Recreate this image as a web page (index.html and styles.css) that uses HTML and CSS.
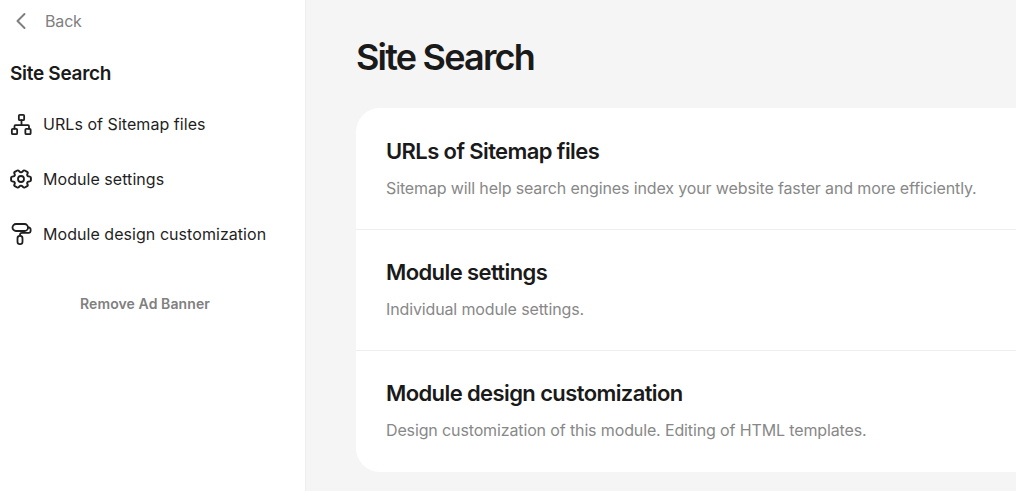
FILE: index.html
```html
<!DOCTYPE html>
<html lang="en">
<head>
<meta charset="utf-8">
<title>Site Search</title>
<link rel="stylesheet" href="styles.css">
</head>
<body>
<div class="app">
  <aside class="sidebar">
    <a class="back" href="#">
      <svg class="back-icon" width="24" height="24" viewBox="0 0 24 24" fill="none"><path d="M14.500 5 7.500 12l7 7" stroke="#7f7f7f" stroke-width="2" stroke-linecap="round" stroke-linejoin="round"/></svg>
      <span>Back</span>
    </a>
    <h2 class="side-title">Site Search</h2>
    <nav class="menu">
      <a class="menu-item" href="#">
        <svg width="24" height="24" viewBox="0 0 24 24" fill="none" stroke="#1f1f1f" stroke-width="1.8" stroke-linejoin="round" stroke-linecap="round"><rect x="8.850" y="2.850" width="5.300" height="5.300" rx="1"/><rect x="1.850" y="16.850" width="5.300" height="5.300" rx="1"/><rect x="15.350" y="16.850" width="5.300" height="5.300" rx="1"/><path d="M11.500 8.200V13M4.500 16.800V14.200a1 1 0 0 1 1-1h12.500a1 1 0 0 1 1 1v2.600"/></svg>
        <span>URLs of Sitemap files</span>
      </a>
      <a class="menu-item" href="#">
        <svg width="24" height="24" viewBox="0 0 24 24" fill="none" stroke="#1f1f1f" stroke-width="1.8" stroke-linejoin="round"><path transform="translate(11 12) scale(1.100 1) rotate(90) translate(-12 -12)" d="M9.594 3.940c.09-.542.56-.94 1.110-.94h2.593c.55 0 1.020.398 1.110.94l.213 1.281c.063.374.313.686.645.87.074.04.147.083.22.127.325.196.72.257 1.075.124l1.217-.456a1.125 1.125 0 0 1 1.370.49l1.296 2.247a1.125 1.125 0 0 1-.26 1.431l-1.003.827c-.293.241-.438.613-.43.992a7.723 7.723 0 0 1 0 .255c-.008.378.137.75.43.991l1.004.827c.424.35.534.955.26 1.430l-1.298 2.247a1.125 1.125 0 0 1-1.369.491l-1.217-.456c-.355-.133-.75-.072-1.076.124a6.470 6.470 0 0 1-.22.128c-.331.183-.581.495-.644.869l-.213 1.281c-.09.543-.56.94-1.110.94h-2.594c-.55 0-1.019-.398-1.110-.94l-.213-1.281c-.062-.374-.312-.686-.644-.87a6.520 6.520 0 0 1-.22-.127c-.325-.196-.72-.257-1.076-.124l-1.217.456a1.125 1.125 0 0 1-1.369-.49l-1.297-2.247a1.125 1.125 0 0 1 .26-1.431l1.004-.827c.292-.24.437-.613.43-.991a6.932 6.932 0 0 1 0-.255c.007-.38-.138-.751-.43-.992l-1.004-.827a1.125 1.125 0 0 1-.26-1.430l1.297-2.247a1.125 1.125 0 0 1 1.370-.491l1.216.456c.356.133.751.072 1.076-.124.072-.044.146-.086.22-.128.332-.183.582-.495.644-.869l.214-1.280Z"/><circle cx="11" cy="12" r="3"/></svg>
        <span>Module settings</span>
      </a>
      <a class="menu-item" href="#">
        <svg width="24" height="24" viewBox="0 0 24 24" fill="none" stroke="#1f1f1f" stroke-width="1.8" stroke-linejoin="round" stroke-linecap="round"><rect x="2.500" y="2" width="15.500" height="7" rx="3.500"/><path d="M18 5.500h.8a1.800 1.800 0 0 1 1.800 1.800v1.700a1.800 1.800 0 0 1-1.800 1.800h-6.800a2 2 0 0 0-2 2v.2"/><rect x="7.500" y="13.800" width="5" height="8.300" rx="2.400"/></svg>
        <span>Module design customization</span>
      </a>
    </nav>
    <a class="remove-ad" href="#">Remove Ad Banner</a>
  </aside>
  <main class="main">
    <h1 class="page-title">Site Search</h1>
    <section class="card">
      <a class="row" href="#">
        <h3 class="row-title">URLs of Sitemap files</h3>
        <p class="row-desc">Sitemap will help search engines index your website faster and more efficiently.</p>
      </a>
      <a class="row" href="#">
        <h3 class="row-title">Module settings</h3>
        <p class="row-desc">Individual module settings.</p>
      </a>
      <a class="row" href="#">
        <h3 class="row-title">Module design customization</h3>
        <p class="row-desc">Design customization of this module. Editing of HTML templates.</p>
      </a>
    </section>
  </main>
</div>
</body>
</html>
```
FILE: styles.css
```css
* { box-sizing: border-box; }
html, body { margin: 0; height: 100%; overflow: hidden; }
body { font-family: Inter, "Liberation Sans", sans-serif; color: #1a1a1a; background: #f5f5f5; }
a { text-decoration: none; color: inherit; }
.app { display: flex; width: 1016px; height: 491px; overflow: hidden; }
.sidebar { flex: 0 0 306px; background: #fff; border-right: 1px solid #eeeeee; padding: 9px 0 0 10px; }
.back { display: flex; align-items: center; gap: 11px; height: 24px; font-size: 16px; color: #808080; letter-spacing: -0.16px; }
.side-title { margin: 27px 0 0; font-size: 19px; line-height: 28px; font-weight: 600; letter-spacing: -0.3px; color: #1a1a1a; }
.menu { margin-top: 24px; display: flex; flex-direction: column; gap: 31px; }
.menu-item { display: flex; align-items: center; gap: 9px; height: 24px; font-size: 16px; font-weight: 400; letter-spacing: 0.05px; color: #1f1f1f; }
.remove-ad { display: block; width: 270px; margin-top: 48px; text-align: center; font-size: 14px; line-height: 20px; font-weight: 600; color: #808080; letter-spacing: 0.1px; }
.main { flex: 1 1 auto; min-width: 0; padding: 35px 0 0 50px; }
.page-title { margin: 0 0 29px; font-size: 36px; line-height: 44px; font-weight: 600; letter-spacing: -1.8px; color: #1a1a1a; }
.card { width: 760px; background: #fff; border-radius: 24px; }
.row { display: block; height: 121px; padding: 29px 30px 0; }
.row + .row { border-top: 1px solid #eeeeee; padding-top: 28px; }
.row:last-child { height: 122px; }
.row-title { margin: 0; font-size: 22px; line-height: 28px; font-weight: 600; letter-spacing: -0.6px; color: #1a1a1a; }
.row-desc { margin: 11px 0 0; font-size: 16px; line-height: 24px; color: #888888; letter-spacing: -0.13px; }
```
